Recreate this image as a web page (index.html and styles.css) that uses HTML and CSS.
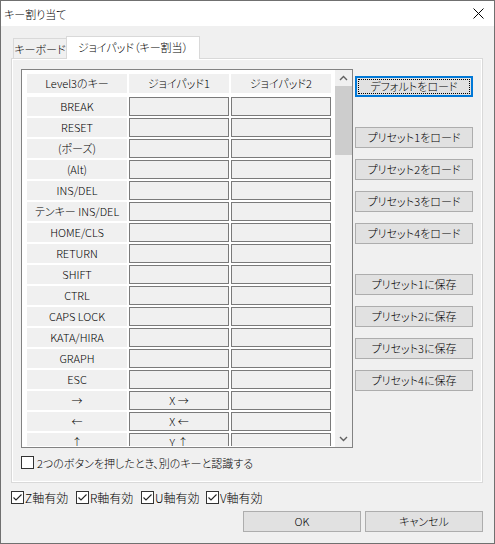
FILE: index.html
```html
<!DOCTYPE html>
<html lang="ja">
<head>
<meta charset="utf-8">
<title>キー割り当て</title>
<link rel="stylesheet" href="styles.css">
</head>
<body>
<div class="window">
  <div class="titlebar">
    <span class="title">キー割り当て</span>
    <svg class="close" width="11" height="11" viewBox="0 0 11 11"><path d="M0.5 0.5 L10.5 10.5 M10.5 0.5 L0.5 10.5" stroke="#000" stroke-width="1" fill="none"/></svg>
  </div>
  <div class="body">
    <div class="tabstrip">
      <div class="tab">キーボード</div>
      <div class="tab active">ジョイパッド（キー割当）</div>
    </div>
    <div class="panel">
      <div class="panel-main">
        <div class="listbox">
          <div class="list-content">
            <div class="row header"><div class="cell label">Level3のキー</div><div class="cell label">ジョイパッド1</div><div class="cell label">ジョイパッド2</div></div>
            <div class="row"><div class="cell label">BREAK</div><div class="cell input"></div><div class="cell input"></div></div>
            <div class="row"><div class="cell label">RESET</div><div class="cell input"></div><div class="cell input"></div></div>
            <div class="row"><div class="cell label">(ポーズ)</div><div class="cell input"></div><div class="cell input"></div></div>
            <div class="row"><div class="cell label">(Alt)</div><div class="cell input"></div><div class="cell input"></div></div>
            <div class="row"><div class="cell label">INS/DEL</div><div class="cell input"></div><div class="cell input"></div></div>
            <div class="row"><div class="cell label">テンキー INS/DEL</div><div class="cell input"></div><div class="cell input"></div></div>
            <div class="row"><div class="cell label">HOME/CLS</div><div class="cell input"></div><div class="cell input"></div></div>
            <div class="row"><div class="cell label">RETURN</div><div class="cell input"></div><div class="cell input"></div></div>
            <div class="row"><div class="cell label">SHIFT</div><div class="cell input"></div><div class="cell input"></div></div>
            <div class="row"><div class="cell label">CTRL</div><div class="cell input"></div><div class="cell input"></div></div>
            <div class="row"><div class="cell label">CAPS LOCK</div><div class="cell input"></div><div class="cell input"></div></div>
            <div class="row"><div class="cell label">KATA/HIRA</div><div class="cell input"></div><div class="cell input"></div></div>
            <div class="row"><div class="cell label">GRAPH</div><div class="cell input"></div><div class="cell input"></div></div>
            <div class="row"><div class="cell label">ESC</div><div class="cell input"></div><div class="cell input"></div></div>
            <div class="row"><div class="cell label">→</div><div class="cell input">X →</div><div class="cell input"></div></div>
            <div class="row"><div class="cell label">←</div><div class="cell input">X ←</div><div class="cell input"></div></div>
            <div class="row last"><div class="cell label">↑</div><div class="cell input">Y ↑</div><div class="cell input"></div></div>
          </div>
          <div class="scrollbar">
            <div class="sb-btn"><svg width="9" height="6" viewBox="0 0 9 6"><path d="M1 5 L4.5 1.5 L8 5" stroke="#606060" stroke-width="1.4" fill="none"/></svg></div>
            <div class="sb-thumb"></div>
            <div class="sb-track"></div>
            <div class="sb-btn"><svg width="9" height="6" viewBox="0 0 9 6"><path d="M1 1 L4.5 4.5 L8 1" stroke="#606060" stroke-width="1.4" fill="none"/></svg></div>
          </div>
        </div>
        <div class="side-buttons">
          <button class="btn default"><span class="focus">デフォルトをロード</span></button>
          <button class="btn group-start">プリセット1をロード</button>
          <button class="btn">プリセット2をロード</button>
          <button class="btn">プリセット3をロード</button>
          <button class="btn">プリセット4をロード</button>
          <button class="btn group-start">プリセット1に保存</button>
          <button class="btn">プリセット2に保存</button>
          <button class="btn">プリセット3に保存</button>
          <button class="btn">プリセット4に保存</button>
        </div>
      </div>
      <div class="check combo"><span class="box"></span><span class="check-text">2つのボタンを押したとき、別のキーと認識する</span></div>
    </div>
    <div class="axes">
      <div class="check axis"><span class="box checked"><svg width="11" height="11" viewBox="0 0 11 11"><path d="M1.5 5.5 L4 8 L9.5 2.5" stroke="#222" stroke-width="1.1" fill="none"/></svg></span><span class="check-text">Z軸有効</span></div>
      <div class="check axis"><span class="box checked"><svg width="11" height="11" viewBox="0 0 11 11"><path d="M1.5 5.5 L4 8 L9.5 2.5" stroke="#222" stroke-width="1.1" fill="none"/></svg></span><span class="check-text">R軸有効</span></div>
      <div class="check axis"><span class="box checked"><svg width="11" height="11" viewBox="0 0 11 11"><path d="M1.5 5.5 L4 8 L9.5 2.5" stroke="#222" stroke-width="1.1" fill="none"/></svg></span><span class="check-text">U軸有効</span></div>
      <div class="check axis"><span class="box checked"><svg width="11" height="11" viewBox="0 0 11 11"><path d="M1.5 5.5 L4 8 L9.5 2.5" stroke="#222" stroke-width="1.1" fill="none"/></svg></span><span class="check-text">V軸有効</span></div>
    </div>
    <div class="actions">
      <button class="btn action">OK</button>
      <button class="btn action">キャンセル</button>
    </div>
  </div>
</div>
</body>
</html>
```

FILE: styles.css
```css
* { box-sizing: border-box; }
html, body { margin: 0; padding: 0; }
body {
  font-family: "Noto Sans CJK JP", "Noto Sans", sans-serif;
  font-weight: 300;
  font-size: 11px;
  font-feature-settings: "palt";
  color: #000;
  background: #f0f0f0;
}
.window {
  width: 495px;
  height: 544px;
  border: 1px solid #707070;
  background: #f0f0f0;
  display: flex;
  flex-direction: column;
  overflow: hidden;
}
.titlebar {
  height: 25px;
  background: #fff;
  display: flex;
  align-items: center;
  justify-content: space-between;
  padding: 0 10px 0 3px;
  flex: none;
}
.title { line-height: 16px; font-size: 11px; }
.close { display: block; }
.body {
  padding: 10px 11px 0 10px;
  display: flex;
  flex-direction: column;
}
.tabstrip {
  height: 22px;
  display: flex;
  align-items: flex-end;
  padding-left: 2px;
}
.tab {
  height: 20px;
  width: 54px;
  border: 1px solid #d9d9d9;
  border-bottom: none;
  background: #f0f0f0;
  display: flex;
  align-items: center;
  justify-content: center;
  line-height: 16px;
  white-space: nowrap;
  padding-top: 1px;
}
.tab.active {
  width: 134px;
  height: 23px;
  margin-left: -1px;
  margin-bottom: -1px;
  background: #fff;
  position: relative;
  z-index: 1;
  padding-top: 0;
  padding-bottom: 2px;
}
.panel {
  height: 425px;
  border: 1px solid #d9d9d9;
  box-shadow: inset 0 0 0 1px #fff;
  padding: 10px 0 0 9px;
}
.panel-main {
  display: flex;
  align-items: flex-start;
}
.listbox {
  width: 332px;
  height: 379px;
  border: 1px solid #828282;
  background: #fff;
  display: flex;
  overflow: hidden;
}
.list-content {
  width: 313px;
  height: 100%;
  padding: 4px 0 0 5px;
  overflow: hidden;
}
.row {
  display: grid;
  grid-template-columns: 100px 100px 100px;
  column-gap: 2px;
  height: 19px;
  margin-bottom: 2px;
}
.row.header { margin-bottom: 4px; }
.row.last { height: 13px; overflow: hidden; margin-bottom: 0; }
.cell {
  height: 19px;
  line-height: 18px;
  text-align: center;
  white-space: nowrap;
  background: #f0f0f0;
}
.cell.input {
  border: 1px solid #7a7a7a;
  line-height: 16px;
}
.scrollbar {
  width: 17px;
  margin-left: 4px;
  display: flex;
  flex-direction: column;
  background: #f0f0f0;
}
.sb-btn {
  height: 16px;
  display: flex;
  align-items: center;
  justify-content: center;
  flex: none;
}
.sb-btn svg { display: block; }
.sb-thumb {
  height: 69px;
  background: #cdcdcd;
  flex: none;
}
.sb-track { flex: 1; }
.side-buttons {
  margin-left: 2px;
  padding-top: 7px;
  width: 118px;
  display: flex;
  flex-direction: column;
}
.btn {
  font: inherit;
  font-feature-settings: "palt";
  color: #000;
  width: 118px;
  height: 21px;
  margin: 0 0 11px 0;
  padding: 0;
  border: 1px solid #adadad;
  background: #e1e1e1;
  line-height: 17px;
  display: flex;
  align-items: center;
  justify-content: center;
  white-space: nowrap;
}
.btn.group-start { margin-top: 19px; }
.btn.default {
  border: 2px solid #0078d7;
  padding: 1px;
}
.btn.default .focus {
  display: flex;
  align-items: center;
  justify-content: center;
  width: 100%;
  height: 100%;
  border: 1px dotted #000;
}
.check {
  display: flex;
  align-items: center;
  height: 13px;
}
.box {
  width: 13px;
  height: 13px;
  border: 1px solid #333;
  background: #fff;
  flex: none;
  display: flex;
  align-items: center;
  justify-content: center;
}
.box svg { display: block; }
.check-text {
  margin-left: 3px;
  line-height: 16px;
  white-space: nowrap;
}
.combo { margin-top: 8px; }
.axes {
  display: flex;
  margin-top: 8px;
}
.axis { width: 65px; }
.axis .check-text { margin-left: 1px; font-size: 12px; }
.actions {
  display: flex;
  justify-content: flex-end;
  gap: 4px;
  margin-top: 7px;
}
.btn.action { margin: 0; }
```
